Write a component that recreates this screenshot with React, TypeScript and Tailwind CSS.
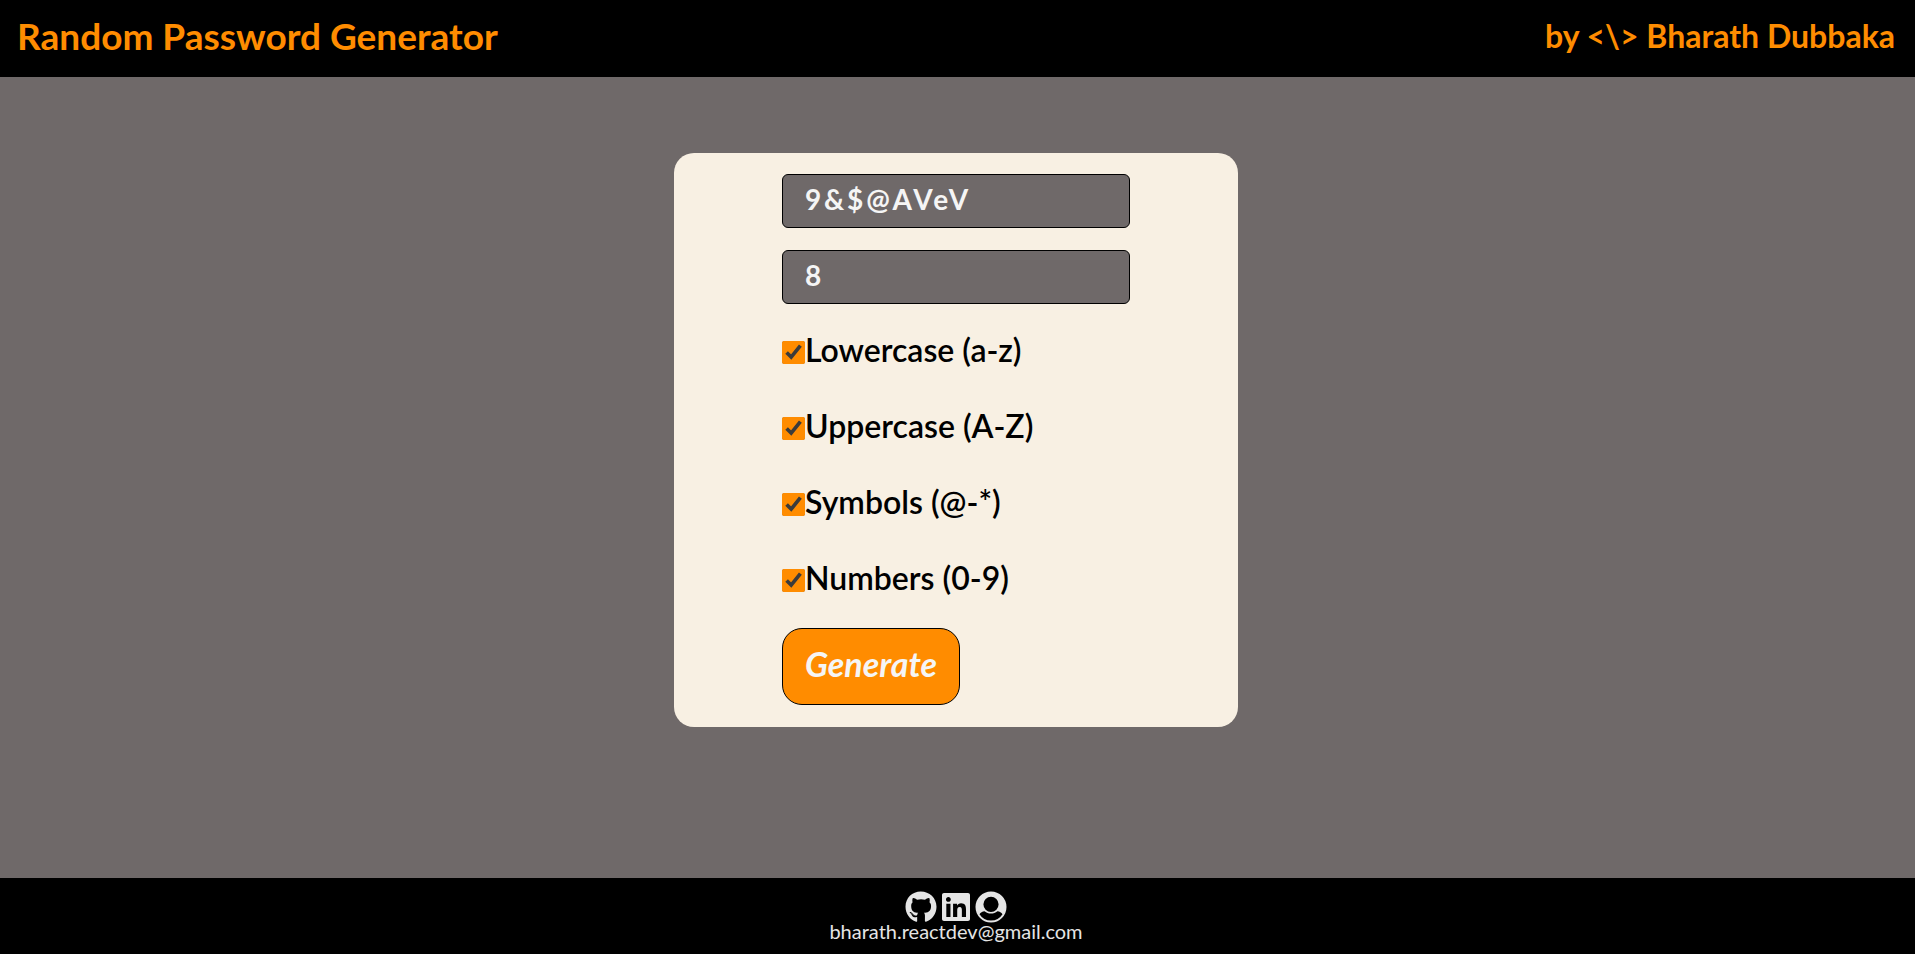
import { useState } from "react";
import { FaGithub, FaLinkedin } from "react-icons/fa";

const groups = [
  { id: "lowercase", label: "Lowercase (a-z)", chars: "abcdefghijklmnopqrstuvwxyz" },
  { id: "uppercase", label: "Uppercase (A-Z)", chars: "ABCDEFGHIJKLMNOPQRSTUVWXYZ" },
  { id: "symbols", label: "Symbols (@-*)", chars: "@#$%&*" },
  { id: "numbers", label: "Numbers (0-9)", chars: "0123456789" },
];

function UserDisc({ className }: { className?: string }) {
  return (
    <svg viewBox="0 0 32 32" className={className} fill="currentColor" fillRule="evenodd" aria-hidden="true">
      <path d="M16 .5a15.5 15.5 0 1 0 0 31 15.5 15.5 0 0 0 0-31Zm0 5.2a7.6 7.6 0 1 1 0 15.2 7.6 7.6 0 0 1 0-15.2ZM9.6 20.3c1.8 1.5 4 2.3 6.4 2.3s4.600-.8 6.400-2.300c2.300.2 4 1.200 5.100 3A13.700 13.700 0 0 1 16 29.600a13.700 13.700 0 0 1-11.500-6.300c1.100-1.800 2.800-2.800 5.100-3Z" />
    </svg>
  );
}

const links = [
  { label: "GitHub", Icon: FaGithub },
  { label: "LinkedIn", Icon: FaLinkedin },
  { label: "Portfolio", Icon: UserDisc },
];

const fieldClass =
  "h-[54px] w-full rounded-md border border-black bg-[#6f6969] px-[22px] pb-1 text-[28px] font-bold tracking-widest text-[#f5f5f5] outline-none";

export default function App() {
  const [password, setPassword] = useState("9&$@AVeV");
  const [length, setLength] = useState("8");
  const [enabled, setEnabled] = useState(groups.map((g) => g.id));

  const toggle = (id: string) =>
    setEnabled((ids) => (ids.includes(id) ? ids.filter((i) => i !== id) : [...ids, id]));

  const generate = () => {
    const pool = groups.filter((g) => enabled.includes(g.id)).map((g) => g.chars).join("");
    const pick = () => pool.charAt(Math.floor(Math.random() * pool.length));
    setPassword(Array.from({ length: Number(length) || 0 }, pick).join(""));
  };

  return (
    <div className="flex min-h-screen flex-col bg-[#6f6969] font-['Lato',sans-serif]">
      <header className="flex items-center justify-between bg-black pt-3 pr-[20px] pb-[17px] pl-[17px] text-[#ff8c00]">
        <h1 className="text-[37px] leading-[48px] font-bold">Random Password Generator</h1>
        <p className="text-[32px] leading-[48px] font-bold">by &lt;\&gt; Bharath Dubbaka</p>
      </header>

      <main className="flex flex-1 flex-col items-center pt-[76px] pr-[3px] pb-10">
        <form
          className="flex w-full max-w-[564px] flex-col items-center rounded-[20px] bg-[#f8f0e3] px-6 pt-[21px] pb-[22px]"
          onSubmit={(e) => {
            e.preventDefault();
            generate();
          }}
        >
          <div className="flex w-full max-w-[348px] flex-col items-start gap-[22px]">
            <input aria-label="Password" readOnly value={password} className={fieldClass} />
            <input
              aria-label="Password length"
              inputMode="numeric"
              value={length}
              onChange={(e) => setLength(e.target.value)}
              className={fieldClass}
            />
            <div className="flex flex-col gap-6">
              {groups.map((g) => (
                <div key={g.id} className="flex h-[52px] items-center">
                  <input
                    id={g.id}
                    type="checkbox"
                    checked={enabled.includes(g.id)}
                    onChange={() => toggle(g.id)}
                    className="size-[23px] accent-[#ff8c00]"
                  />
                  <label htmlFor={g.id} className="pb-1 text-[32px] leading-[48px] font-semibold text-black">
                    {g.label}
                  </label>
                </div>
              ))}
            </div>
            <button
              type="submit"
              className="rounded-[20px] border border-black bg-[#ff8c00] px-[22px] pt-3 pb-[17px] text-[34px] leading-[46px] font-bold text-[#f5f5f5] italic"
            >
              Generate
            </button>
          </div>
        </form>
      </main>

      <footer className="flex flex-col items-center bg-black pt-[13px] pr-[3px] pb-[15px] text-[#e5e5e5]">
        <nav className="flex gap-[3px]">
          {links.map(({ label, Icon }) => (
            <a key={label} href="#" aria-label={label}>
              <Icon className="size-8" />
            </a>
          ))}
        </nav>
        <a href="mailto:bharath.reactdev@gmail.com" className="text-[20px] leading-4">
          bharath.reactdev@gmail.com
        </a>
      </footer>
    </div>
  );
}
